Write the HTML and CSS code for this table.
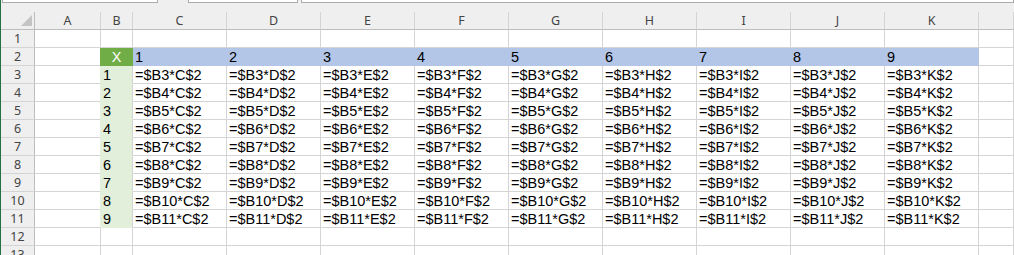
FILE: index.html
```html
<!DOCTYPE html>
<html lang="ja">
<head>
  <meta charset="UTF-8" />
  <title>九九 - Sheet1</title>
  <link rel="stylesheet" href="styles.css">
</head>
<body>
  <div class="frame">
    <div class="edge"></div>
    <div class="book">
      <!-- bottom of the name box / formula bar -->
      <div class="bar">
        <div class="box name"></div>
        <div class="box fx"></div>
        <div class="box formula"></div>
      </div>

      <div class="sheet">
        <div class="hd corner"><span class="tri"></span></div>
        <div class="hd">A</div><div class="hd">B</div><div class="hd">C</div><div class="hd">D</div><div class="hd">E</div><div class="hd">F</div><div class="hd">G</div><div class="hd">H</div><div class="hd">I</div><div class="hd">J</div><div class="hd">K</div><div class="hd"></div>

        <div class="rh">1</div>
        <div class="c"></div><div class="c"></div><div class="c"></div><div class="c"></div><div class="c"></div><div class="c"></div><div class="c"></div><div class="c"></div><div class="c"></div><div class="c"></div><div class="c"></div><div class="c"></div>

        <div class="rh">2</div>
        <div class="c"></div><div class="c x">X</div><div class="c top">1</div><div class="c top">2</div><div class="c top">3</div><div class="c top">4</div><div class="c top">5</div><div class="c top">6</div><div class="c top">7</div><div class="c top">8</div><div class="c top">9</div><div class="c"></div>

        <div class="rh">3</div>
        <div class="c"></div><div class="c side">1</div><div class="c">=$B3*C$2</div><div class="c">=$B3*D$2</div><div class="c">=$B3*E$2</div><div class="c">=$B3*F$2</div><div class="c">=$B3*G$2</div><div class="c">=$B3*H$2</div><div class="c">=$B3*I$2</div><div class="c">=$B3*J$2</div><div class="c">=$B3*K$2</div><div class="c"></div>

        <div class="rh">4</div>
        <div class="c"></div><div class="c side">2</div><div class="c">=$B4*C$2</div><div class="c">=$B4*D$2</div><div class="c">=$B4*E$2</div><div class="c">=$B4*F$2</div><div class="c">=$B4*G$2</div><div class="c">=$B4*H$2</div><div class="c">=$B4*I$2</div><div class="c">=$B4*J$2</div><div class="c">=$B4*K$2</div><div class="c"></div>

        <div class="rh">5</div>
        <div class="c"></div><div class="c side">3</div><div class="c">=$B5*C$2</div><div class="c">=$B5*D$2</div><div class="c">=$B5*E$2</div><div class="c">=$B5*F$2</div><div class="c">=$B5*G$2</div><div class="c">=$B5*H$2</div><div class="c">=$B5*I$2</div><div class="c">=$B5*J$2</div><div class="c">=$B5*K$2</div><div class="c"></div>

        <div class="rh">6</div>
        <div class="c"></div><div class="c side">4</div><div class="c">=$B6*C$2</div><div class="c">=$B6*D$2</div><div class="c">=$B6*E$2</div><div class="c">=$B6*F$2</div><div class="c">=$B6*G$2</div><div class="c">=$B6*H$2</div><div class="c">=$B6*I$2</div><div class="c">=$B6*J$2</div><div class="c">=$B6*K$2</div><div class="c"></div>

        <div class="rh">7</div>
        <div class="c"></div><div class="c side">5</div><div class="c">=$B7*C$2</div><div class="c">=$B7*D$2</div><div class="c">=$B7*E$2</div><div class="c">=$B7*F$2</div><div class="c">=$B7*G$2</div><div class="c">=$B7*H$2</div><div class="c">=$B7*I$2</div><div class="c">=$B7*J$2</div><div class="c">=$B7*K$2</div><div class="c"></div>

        <div class="rh">8</div>
        <div class="c"></div><div class="c side">6</div><div class="c">=$B8*C$2</div><div class="c">=$B8*D$2</div><div class="c">=$B8*E$2</div><div class="c">=$B8*F$2</div><div class="c">=$B8*G$2</div><div class="c">=$B8*H$2</div><div class="c">=$B8*I$2</div><div class="c">=$B8*J$2</div><div class="c">=$B8*K$2</div><div class="c"></div>

        <div class="rh">9</div>
        <div class="c"></div><div class="c side">7</div><div class="c">=$B9*C$2</div><div class="c">=$B9*D$2</div><div class="c">=$B9*E$2</div><div class="c">=$B9*F$2</div><div class="c">=$B9*G$2</div><div class="c">=$B9*H$2</div><div class="c">=$B9*I$2</div><div class="c">=$B9*J$2</div><div class="c">=$B9*K$2</div><div class="c"></div>

        <div class="rh">10</div>
        <div class="c"></div><div class="c side">8</div><div class="c">=$B10*C$2</div><div class="c">=$B10*D$2</div><div class="c">=$B10*E$2</div><div class="c">=$B10*F$2</div><div class="c">=$B10*G$2</div><div class="c">=$B10*H$2</div><div class="c">=$B10*I$2</div><div class="c">=$B10*J$2</div><div class="c">=$B10*K$2</div><div class="c"></div>

        <div class="rh">11</div>
        <div class="c"></div><div class="c side">9</div><div class="c">=$B11*C$2</div><div class="c">=$B11*D$2</div><div class="c">=$B11*E$2</div><div class="c">=$B11*F$2</div><div class="c">=$B11*G$2</div><div class="c">=$B11*H$2</div><div class="c">=$B11*I$2</div><div class="c">=$B11*J$2</div><div class="c">=$B11*K$2</div><div class="c"></div>

        <div class="rh">12</div>
        <div class="c"></div><div class="c"></div><div class="c"></div><div class="c"></div><div class="c"></div><div class="c"></div><div class="c"></div><div class="c"></div><div class="c"></div><div class="c"></div><div class="c"></div><div class="c"></div>

        <div class="rh">13</div>
        <div class="c"></div><div class="c"></div><div class="c"></div><div class="c"></div><div class="c"></div><div class="c"></div><div class="c"></div><div class="c"></div><div class="c"></div><div class="c"></div><div class="c"></div><div class="c"></div>
      </div>
    </div>
  </div>
</body>
</html>
```

FILE: styles.css
```css
body {
  margin: 0;
  padding: 0;
  background: #fff;
  overflow: hidden;
}
.frame {
  display: flex;
  height: 255px;
}
.edge {
  width: 1px;
  background: #217346;
  flex: none;
}
.book {
  flex: 1;
  background: #efefef;
}

/* formula bar remnants at the top */
.bar {
  display: flex;
  height: 12px;
  align-items: flex-start;
}
.box {
  height: 2px;
  background: #fff;
  border: 1px solid #ababab;
  border-top: none;
}
.name {
  margin-left: 1px;
  width: 154px;
}
.fx {
  margin-left: 30px;
  width: 108px;
}
.formula {
  margin-left: 3px;
  flex: 1;
}

.sheet {
  display: grid;
  grid-template-columns: 34px 66px 32px repeat(9, 94px) 1fr;
  grid-auto-rows: 18px;
  font-family: "Liberation Sans", Arial, sans-serif;
  font-size: 14.5px;
  color: #000;
}
.sheet > div {
  box-sizing: border-box;
  white-space: nowrap;
  overflow: hidden;
}

/* column and row headers */
.hd {
  border-right: 1px solid #d4d4d4;
  border-bottom: 1px solid #bdbdbd;
  text-align: center;
  font-family: "Noto Sans", "Open Sans", sans-serif;
  font-size: 12.5px;
  line-height: 17px;
  color: #444;
}
.corner {
  position: relative;
  border-right-color: #bdbdbd;
}
.tri {
  position: absolute;
  right: 2px;
  bottom: 3px;
  width: 0;
  height: 0;
  border-left: 11px solid transparent;
  border-bottom: 11px solid #c4c4c4;
}
.rh {
  background: #efefef;
  border-right: 1px solid #bdbdbd;
  border-bottom: 1px solid #d4d4d4;
  text-align: center;
  font-family: "Noto Sans", "Open Sans", sans-serif;
  font-size: 12.5px;
  line-height: 18px;
  color: #444;
}

/* cells */
.c {
  background: #fff;
  border-right: 1px solid #d4d4d4;
  border-bottom: 1px solid #d4d4d4;
  padding-left: 2px;
  line-height: 18px;
}
.x {
  background: #70ad47;
  border-color: #70ad47;
  box-shadow: -1px 0 0 #70ad47;
  color: #fff;
  text-align: center;
  padding-left: 0;
}
.top {
  background: #b4c6e7;
  border-color: #b4c6e7;
}
.side {
  background: #e2efda;
  border-bottom-color: #e2efda;
  box-shadow: -1px 0 0 #e2efda;
}
```
